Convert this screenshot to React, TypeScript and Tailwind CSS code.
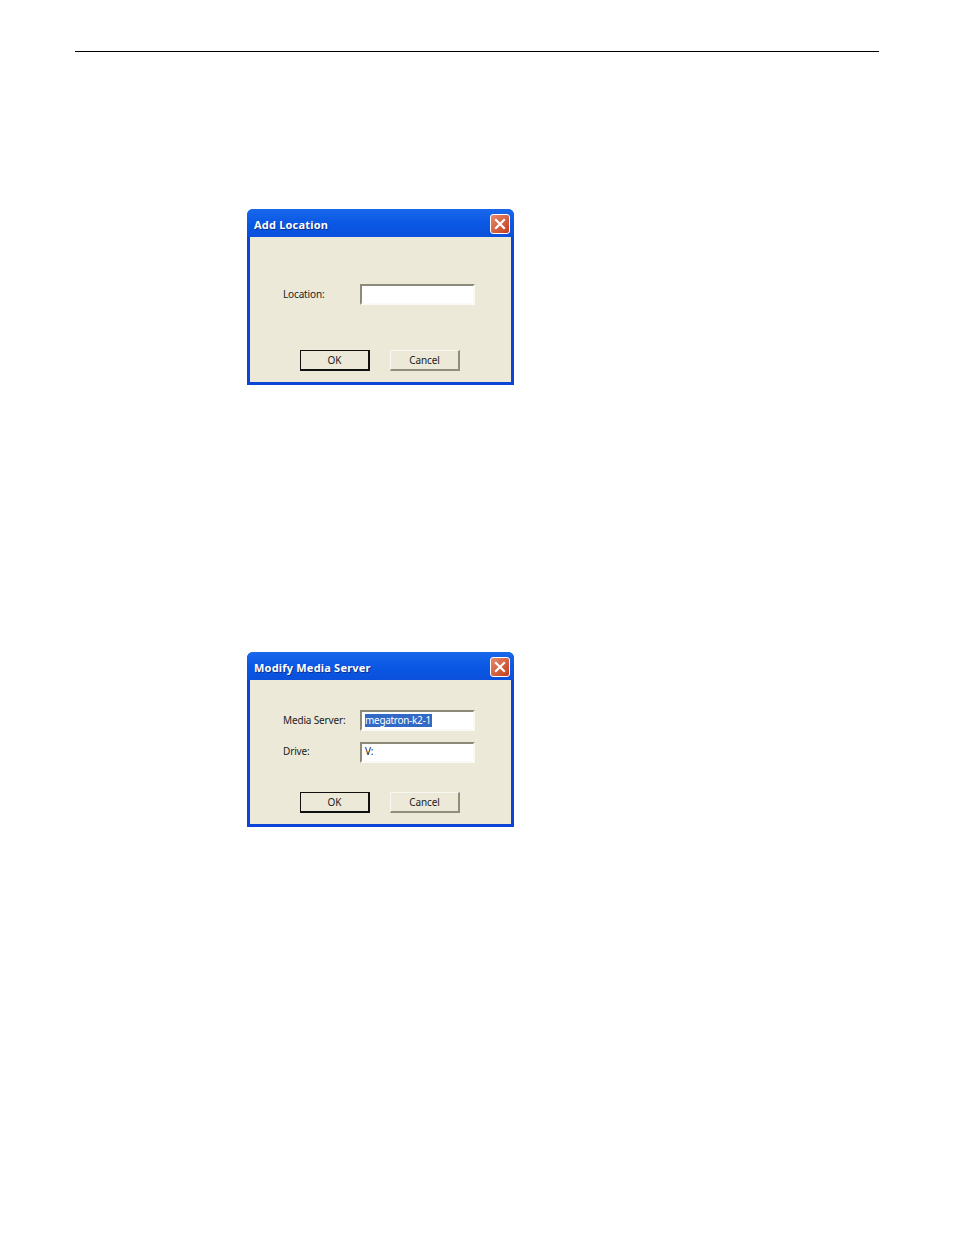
const Btn = ({ label, primary }: { label: string; primary?: boolean }) => (
  <div
    className={
      primary
        ? "w-[70px] h-[21px] flex items-center justify-center border border-[#111111] border-r-2 border-b-2 bg-[#ece9d8] text-[10px] leading-none tracking-[-0.1px] text-[#222222]"
        : "w-[70px] h-[21px] flex items-center justify-center border border-[#f8f7f0] border-r-2 border-b-2 border-r-[#8f8d7c] border-b-[#8f8d7c] bg-[#ece9d8] text-[10px] leading-none tracking-[-0.1px] text-[#222222]"
    }
  >
    {label}
  </div>
);

const Field = ({ label, value, selected, raise }: { label: string; value?: string; selected?: boolean; raise?: boolean }) => (
  <div className="flex items-center h-[21px]">
    <div className={raise ? "w-[77px] mb-[4px] text-[10px] leading-none tracking-[-0.15px] text-[#222222]" : "w-[77px] mb-[2px] text-[10px] leading-none tracking-[-0.15px] text-[#222222]"}>{label}</div>
    <div className="w-[115px] h-[21px] border-2 border-t-[#8c8a78] border-l-[#8c8a78] border-r-[#fbfaf5] border-b-[#fbfaf5] bg-white flex items-center pl-[3px] text-[10px] leading-none tracking-[-0.3px] text-[#222222]">
      {selected ? <span className="bg-[#3169c6] text-white h-[13px] flex items-center mb-px pr-px">{value}</span> : <span className="mb-[3px]">{value}</span>}
    </div>
  </div>
);

const Dialog = ({ title, height, children }: { title: string; height: string; children: React.ReactNode }) => (
  <div className={`${height} w-[267px] flex flex-col rounded-t-[6px] bg-[#0a45d8] overflow-hidden`}>
    <div className="h-[28px] shrink-0 flex items-center justify-between pl-[7px] pr-[4px] bg-gradient-to-b from-[#1a68ec] via-[#0a58e4] to-[#0a50dc]">
      <span className="mt-[4px] text-[11px] font-bold tracking-[0.2px] text-white [text-shadow:1px_1px_0_#0a2f8c]">{title}</span>
      <div className="mt-[2px] w-[20px] h-[20px] rounded-[3px] border border-white bg-gradient-to-br from-[#e88a6c] to-[#c23a16] flex items-center justify-center">
        <svg width="12" height="12" viewBox="0 0 12 12">
          <path d="M2 2 L10 10 M10 2 L2 10" stroke="#ffffff" strokeWidth="2.2" strokeLinecap="square" />
        </svg>
      </div>
    </div>
    <div className="flex-1 mx-[3px] mb-[3px] bg-[#ece9d8] flex flex-col pl-[33px]">{children}</div>
  </div>
);

export default function App() {
  return (
    <div className="relative w-[954px] h-[1235px] bg-white [font-family:'Noto_Sans',sans-serif] overflow-hidden">
      <div className="pt-[51px] px-[75px]">
        <div className="h-px bg-black" />
      </div>
      <div className="pl-[247px] pt-[157px]">
        <Dialog title="Add Location" height="h-[176px]">
          <div className="mt-[47px]">
            <Field label="Location:" />
          </div>
          <div className="mt-[45px] flex gap-[20px] pl-[17px]">
            <Btn label="OK" primary />
            <Btn label="Cancel" />
          </div>
        </Dialog>
      </div>
      <div className="pl-[247px] pt-[267px]">
        <Dialog title="Modify Media Server" height="h-[175px]">
          <div className="mt-[30px]">
            <Field label="Media Server:" value="megatron-k2-1" selected />
          </div>
          <div className="mt-[11px]">
            <Field label="Drive:" value="V:" raise />
          </div>
          <div className="mt-[29px] flex gap-[20px] pl-[17px]">
            <Btn label="OK" primary />
            <Btn label="Cancel" />
          </div>
        </Dialog>
      </div>
    </div>
  );
}
